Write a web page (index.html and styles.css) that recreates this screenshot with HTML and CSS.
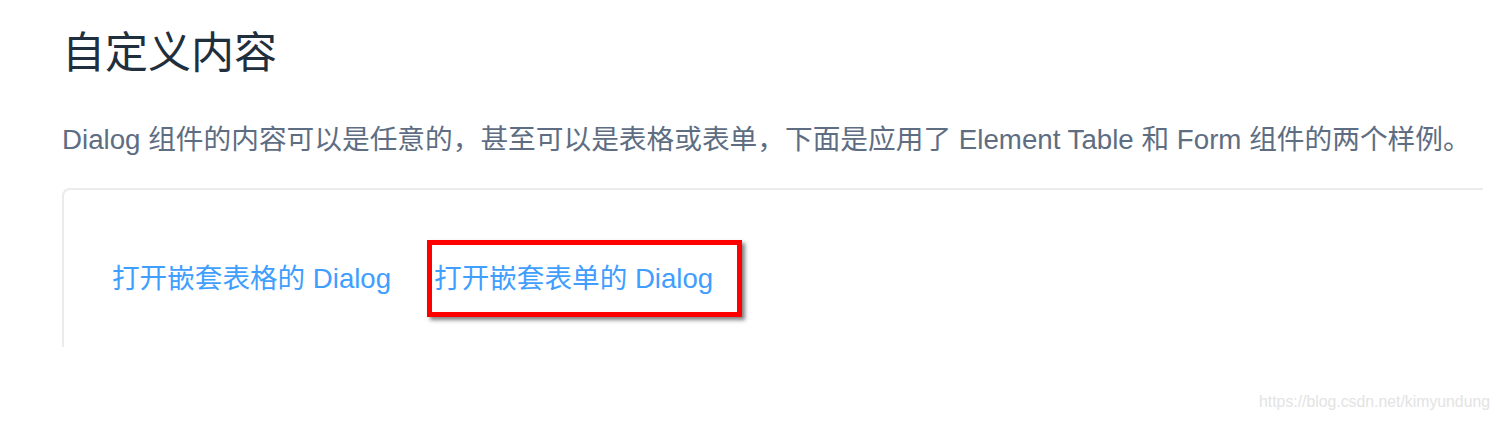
FILE: index.html
```html
<!DOCTYPE html>
<html lang="zh-CN">
<head>
  <meta charset="UTF-8" />
  <meta name="viewport" content="width=device-width, initial-scale=1.0" />
  <title>Dialog 自定义内容</title>
  <link rel="stylesheet" href="styles.css">
</head>
<body>
  <div class="page">
    <h3 class="title">自定义内容</h3>
    <p class="desc">Dialog 组件的内容可以是任意的，甚至可以是表格或表单，下面是应用了 Element Table 和 Form 组件的两个样例。</p>

    <div class="demo">
      <div class="demo-row">
        <button class="text-btn">打开嵌套表格的 Dialog</button>
        <span class="marked">
          <button class="text-btn">打开嵌套表单的 Dialog</button>
        </span>
      </div>
    </div>
  </div>

  <div class="watermark">https://blog.csdn.net/kimyundung</div>
</body>
</html>
```

FILE: styles.css
```css
* {
  box-sizing: border-box;
  margin: 0;
  padding: 0;
}

body {
  background: #fff;
  font-family: "Liberation Sans", "Noto Sans CJK SC", sans-serif;
  width: 1499px;
  height: 421px;
  overflow: hidden;
  position: relative;
}

.page {
  padding-left: 62px;
}

.title {
  font-size: 43px;
  font-weight: normal;
  line-height: 60px;
  color: #1f2f3d;
  margin-top: 23px;
}

.desc {
  font-size: 27.7px;
  line-height: 40px;
  color: #5e6d82;
  margin-top: 37px;
  white-space: nowrap;
}

.demo {
  margin-top: 28px;
  width: 1421px;
  height: 159px;
  border-top: 2px solid #ebebeb;
  border-left: 2px solid #ebebeb;
  border-top-left-radius: 8px;
}

.demo-row {
  display: flex;
  align-items: center;
  padding-left: 48px;
  padding-top: 50px;
}

.text-btn {
  background: none;
  border: none;
  font-family: "Liberation Sans", "Noto Sans CJK SC", sans-serif;
  font-size: 27.6px;
  color: #409eff;
  line-height: 40px;
  cursor: pointer;
}

.marked {
  display: flex;
  align-items: center;
  margin-left: 36px;
  height: 77px;
  padding: 0 24px 0 2px;
  border: 5px solid #f00;
  box-shadow: 3px 3px 4px rgba(0, 0, 0, 0.5);
}

.watermark {
  position: absolute;
  right: 9px;
  bottom: 10px;
  font-size: 15.8px;
  color: #e3e3e3;
}
```
